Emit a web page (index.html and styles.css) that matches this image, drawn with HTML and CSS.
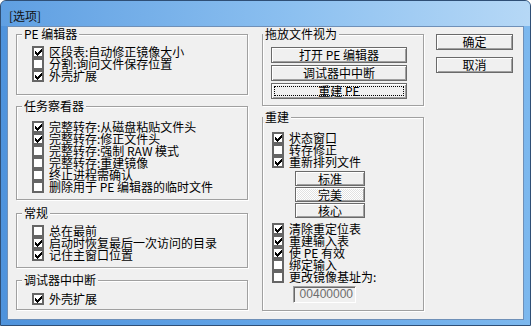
FILE: index.html
```html
<!DOCTYPE html>
<html>
<head>
<meta charset="utf-8">
<link rel="stylesheet" href="styles.css">
</head>
<body>
<div class="window">
  <div class="titlebar"><span class="title">[选项]</span></div>
  <div class="client">
    <div class="col-left">
      <div class="group g-pe">
        <div class="legend">PE 编辑器</div>
        <div class="rows pt6">
          <div class="cb"><span class="box"><svg width="7" height="7" viewBox="0 0 7 7"><path d="M6 0h1v1h-1zM5 1h2v1h-2zM0 2h1v1h-1zM4 2h3v1h-3zM0 3h2v1h-2zM3 3h3v1h-3zM0 4h5v1h-5zM1 5h3v1h-3zM2 6h1v1h-1z"/></svg></span><span class="lbl">区段表:自动修正镜像大小</span></div>
          <div class="cb"><span class="box"></span><span class="lbl">分割:询问文件保存位置</span></div>
          <div class="cb"><span class="box"><svg width="7" height="7" viewBox="0 0 7 7"><path d="M6 0h1v1h-1zM5 1h2v1h-2zM0 2h1v1h-1zM4 2h3v1h-3zM0 3h2v1h-2zM3 3h3v1h-3zM0 4h5v1h-5zM1 5h3v1h-3zM2 6h1v1h-1z"/></svg></span><span class="lbl">外壳扩展</span></div>
        </div>
      </div>
      <div class="group g-task">
        <div class="legend">任务察看器</div>
        <div class="rows pt9">
          <div class="cb"><span class="box"><svg width="7" height="7" viewBox="0 0 7 7"><path d="M6 0h1v1h-1zM5 1h2v1h-2zM0 2h1v1h-1zM4 2h3v1h-3zM0 3h2v1h-2zM3 3h3v1h-3zM0 4h5v1h-5zM1 5h3v1h-3zM2 6h1v1h-1z"/></svg></span><span class="lbl">完整转存:从磁盘粘贴文件头</span></div>
          <div class="cb"><span class="box"><svg width="7" height="7" viewBox="0 0 7 7"><path d="M6 0h1v1h-1zM5 1h2v1h-2zM0 2h1v1h-1zM4 2h3v1h-3zM0 3h2v1h-2zM3 3h3v1h-3zM0 4h5v1h-5zM1 5h3v1h-3zM2 6h1v1h-1z"/></svg></span><span class="lbl">完整转存:修正文件头</span></div>
          <div class="cb"><span class="box"></span><span class="lbl">完整转存:强制 RAW 模式</span></div>
          <div class="cb"><span class="box"></span><span class="lbl">完整转存:重建镜像</span></div>
          <div class="cb"><span class="box"></span><span class="lbl">终止进程需确认</span></div>
          <div class="cb"><span class="box"></span><span class="lbl">删除用于 PE 编辑器的临时文件</span></div>
        </div>
      </div>
      <div class="group g-gen">
        <div class="legend">常规</div>
        <div class="rows pt6">
          <div class="cb"><span class="box"></span><span class="lbl">总在最前</span></div>
          <div class="cb"><span class="box"><svg width="7" height="7" viewBox="0 0 7 7"><path d="M6 0h1v1h-1zM5 1h2v1h-2zM0 2h1v1h-1zM4 2h3v1h-3zM0 3h2v1h-2zM3 3h3v1h-3zM0 4h5v1h-5zM1 5h3v1h-3zM2 6h1v1h-1z"/></svg></span><span class="lbl">启动时恢复最后一次访问的目录</span></div>
          <div class="cb"><span class="box"><svg width="7" height="7" viewBox="0 0 7 7"><path d="M6 0h1v1h-1zM5 1h2v1h-2zM0 2h1v1h-1zM4 2h3v1h-3zM0 3h2v1h-2zM3 3h3v1h-3zM0 4h5v1h-5zM1 5h3v1h-3zM2 6h1v1h-1z"/></svg></span><span class="lbl">记住主窗口位置</span></div>
        </div>
      </div>
      <div class="group g-dbg">
        <div class="legend">调试器中中断</div>
        <div class="rows pt7">
          <div class="cb"><span class="box"><svg width="7" height="7" viewBox="0 0 7 7"><path d="M6 0h1v1h-1zM5 1h2v1h-2zM0 2h1v1h-1zM4 2h3v1h-3zM0 3h2v1h-2zM3 3h3v1h-3zM0 4h5v1h-5zM1 5h3v1h-3zM2 6h1v1h-1z"/></svg></span><span class="lbl">外壳扩展</span></div>
        </div>
      </div>
    </div>

    <div class="col-right">
      <div class="group g-drop">
        <div class="legend legend-r">拖放文件视为</div>
        <div class="drop-btns">
          <div class="btn wide">打开 PE 编辑器</div>
          <div class="btn wide">调试器中中断</div>
          <div class="btn wide focus">重建 PE</div>
        </div>
      </div>
      <div class="group g-rebuild">
        <div class="legend legend-r">重建</div>
        <div class="rows rows-r pt9">
          <div class="cb"><span class="box"><svg width="7" height="7" viewBox="0 0 7 7"><path d="M6 0h1v1h-1zM5 1h2v1h-2zM0 2h1v1h-1zM4 2h3v1h-3zM0 3h2v1h-2zM3 3h3v1h-3zM0 4h5v1h-5zM1 5h3v1h-3zM2 6h1v1h-1z"/></svg></span><span class="lbl">状态窗口</span></div>
          <div class="cb"><span class="box"></span><span class="lbl">转存修正</span></div>
          <div class="cb"><span class="box"><svg width="7" height="7" viewBox="0 0 7 7"><path d="M6 0h1v1h-1zM5 1h2v1h-2zM0 2h1v1h-1zM4 2h3v1h-3zM0 3h2v1h-2zM3 3h3v1h-3zM0 4h5v1h-5zM1 5h3v1h-3zM2 6h1v1h-1z"/></svg></span><span class="lbl">重新排列文件</span></div>
        </div>
        <div class="mode-btns">
          <div class="btn mode">标准</div>
          <div class="btn mode pressed">完美</div>
          <div class="btn mode">核心</div>
        </div>
        <div class="rows rows-r pt5">
          <div class="cb"><span class="box"><svg width="7" height="7" viewBox="0 0 7 7"><path d="M6 0h1v1h-1zM5 1h2v1h-2zM0 2h1v1h-1zM4 2h3v1h-3zM0 3h2v1h-2zM3 3h3v1h-3zM0 4h5v1h-5zM1 5h3v1h-3zM2 6h1v1h-1z"/></svg></span><span class="lbl">清除重定位表</span></div>
          <div class="cb"><span class="box"><svg width="7" height="7" viewBox="0 0 7 7"><path d="M6 0h1v1h-1zM5 1h2v1h-2zM0 2h1v1h-1zM4 2h3v1h-3zM0 3h2v1h-2zM3 3h3v1h-3zM0 4h5v1h-5zM1 5h3v1h-3zM2 6h1v1h-1z"/></svg></span><span class="lbl">重建输入表</span></div>
          <div class="cb"><span class="box"><svg width="7" height="7" viewBox="0 0 7 7"><path d="M6 0h1v1h-1zM5 1h2v1h-2zM0 2h1v1h-1zM4 2h3v1h-3zM0 3h2v1h-2zM3 3h3v1h-3zM0 4h5v1h-5zM1 5h3v1h-3zM2 6h1v1h-1z"/></svg></span><span class="lbl">使 PE 有效</span></div>
          <div class="cb"><span class="box"></span><span class="lbl">绑定输入</span></div>
          <div class="cb"><span class="box"></span><span class="lbl">更改镜像基址为:</span></div>
        </div>
        <div class="edit">00400000</div>
      </div>
    </div>

    <div class="col-btns">
      <div class="btn dlg">确定</div>
      <div class="btn dlg gap7">取消</div>
    </div>
  </div>
</div>
</body>
</html>
```

FILE: styles.css
```css
* { box-sizing: border-box; }
html, body { margin: 0; padding: 0; }
body {
  width: 531px;
  height: 326px;
  overflow: hidden;
  background: #ffffff;
  font-family: "Noto Sans CJK SC", "Noto Sans", sans-serif;
  font-size: 12px;
  color: #000;
}
.window {
  width: 531px;
  height: 326px;
  border: 1px solid #2f4f76;
  border-radius: 6px 6px 0 0;
  background: linear-gradient(to right, #4f93dc, #64a6e8 55%, #7db8ee);
  display: flex;
  flex-direction: column;
  padding: 0 6px 5px 6px;
}
.titlebar {
  height: 25px;
  margin: 0 -6px;
  padding: 9px 0 0 8px;
  background: linear-gradient(to right, #5f9fe2, #8cc0f0 55%, #b6d8f6);
  border-radius: 5px 5px 0 0;
  display: flex;
  align-items: flex-start;
}
.title {
  line-height: 12px;
  height: 12px;
  color: #111;
}
.client {
  flex: 1;
  background: #f0f0f0;
  border: 1px solid #6f90b8;
  display: flex;
  align-items: flex-start;
  padding: 7px 0 0 8px;
}
.col-left { width: 232px; display: flex; flex-direction: column; }
.col-right { width: 162px; margin-left: 14px; display: flex; flex-direction: column; }
.col-btns { width: 77px; margin-left: 12px; display: flex; flex-direction: column; }

.group {
  border: 1px solid #a0a0a0;
  box-shadow: inset 1px 1px 0 #fff, 1px 1px 0 #fff;
  display: flex;
  flex-direction: column;
}
.g-pe { height: 61px; }
.g-task { height: 94px; margin-top: 11px; }
.g-gen { height: 55px; margin-top: 13px; }
.g-dbg { height: 30px; margin-top: 12px; }
.g-drop { height: 72px; }
.g-rebuild { height: 194px; margin-top: 11px; }

.legend {
  align-self: flex-start;
  margin: -7px 0 0 5px;
  padding: 0 2px;
  height: 12px;
  line-height: 12px;
  background: #f0f0f0;
  white-space: nowrap;
}
.legend-r { margin-left: 0; padding: 0 2px 0 2px; }

.rows { display: flex; flex-direction: column; padding-left: 15px; }
.rows-r { padding-left: 9px; }
.pt5 { padding-top: 5px; }
.pt6 { padding-top: 6px; }
.pt7 { padding-top: 7px; }
.pt9 { padding-top: 9px; }

.cb {
  display: flex;
  align-items: flex-start;
  height: 12px;
  line-height: 12px;
  white-space: nowrap;
}
.box {
  flex: none;
  width: 12px;
  height: 12px;
  border: 2px solid #656565;
  background: #fff;
  margin-right: 5px;
  display: flex;
  align-items: center;
  justify-content: center;
}
.box svg { display: block; fill: #000; shape-rendering: crispEdges; }
.lbl { height: 12px; line-height: 12px; }

.btn {
  height: 16px;
  border: 1px solid #6a6a6a;
  background: #f0f0f0;
  box-shadow: inset 1px 1px 0 #ffffff, inset -1px -1px 0 #a0a0a0;
  display: flex;
  align-items: center;
  justify-content: center;
  line-height: 12px;
  white-space: nowrap;
}
.drop-btns { display: flex; flex-direction: column; gap: 2px; padding: 7px 0 0 8px; }
.wide { width: 136px; }
.focus { outline: 1px dotted #000; outline-offset: -4px; }

.mode-btns { display: flex; flex-direction: column; gap: 1px; margin: 3px 0 0 32px; }
.mode { width: 70px; height: 15px; }
.pressed {
  background: repeating-conic-gradient(#ffffff 0 25%, #e2e2e2 0 50%) 0 0 / 2px 2px;
}

.edit {
  width: 63px;
  height: 17px;
  margin: 3px 0 0 30px;
  border: 1px solid;
  border-color: #a0a0a0 #ffffff #ffffff #a0a0a0;
  box-shadow: inset 1px 1px 0 #696969;
  background: #f0f0f0;
  color: #6d6d6d;
  font-family: "Liberation Sans", Arial, sans-serif;
  font-size: 12px;
  line-height: 15px;
  text-align: right;
  padding-right: 2px;
}

.dlg { width: 77px; }
.gap7 { margin-top: 7px; }
```
